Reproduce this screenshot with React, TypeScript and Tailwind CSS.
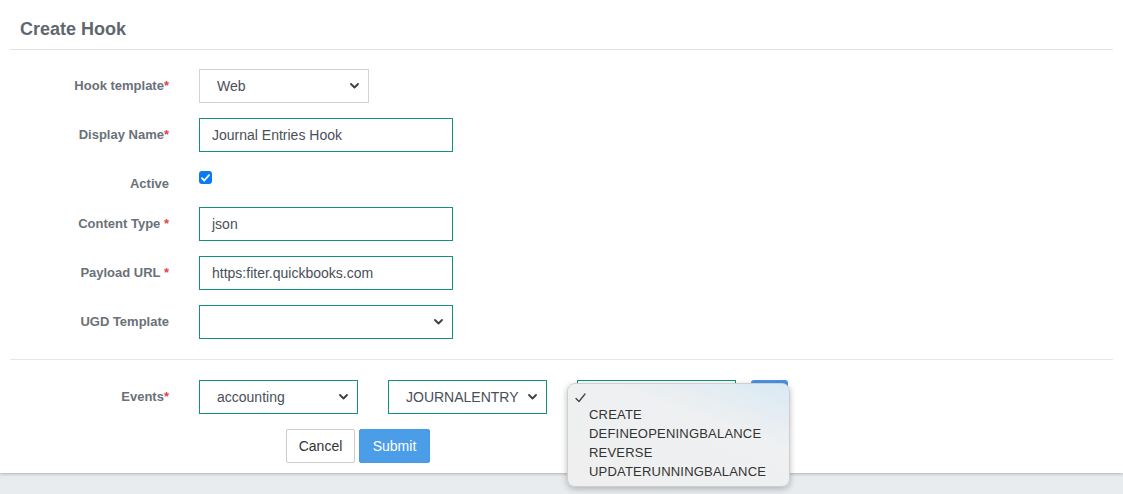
import React from "react";

const teal = "border-[#14917a]";

function Chevron() {
  return (
    <svg width="9" height="6" viewBox="0 0 9 6" className="shrink-0">
      <path d="M1 1l3.5 3.5L8 1" fill="none" stroke="#3a3f44" strokeWidth="1.8" strokeLinecap="round" strokeLinejoin="round" />
    </svg>
  );
}

function Label({ text, star, starSpace }: { text: string; star?: boolean; starSpace?: boolean }) {
  return (
    <div className="w-[169px] shrink-0 text-right text-[13px] font-bold leading-4 text-[#6a7178]">
      {text}
      {star && <span className="text-[#e0434b]">{starSpace ? " *" : "*"}</span>}
    </div>
  );
}

function FakeSelect({ value, width, border }: { value: string; width: string; border: string }) {
  return (
    <div className={`flex h-[34px] items-center justify-between border bg-white pl-[17px] pr-[9px] text-[14px] text-[#495057] ${width} ${border}`}>
      <span>{value}</span>
      <Chevron />
    </div>
  );
}

function TextInput({ value }: { value: string }) {
  return (
    <div className={`flex h-[34px] w-[254px] items-center border bg-white pl-[12px] text-[14px] text-[#495057] ${teal}`}>
      {value}
    </div>
  );
}

const options = ["CREATE", "DEFINEOPENINGBALANCE", "REVERSE", "UPDATERUNNINGBALANCE"];

export default function App() {
  return (
    <div className="min-h-screen bg-[#e9ecef]" style={{ fontFamily: '"Liberation Sans", Arial, sans-serif' }}>
      <div className="h-[473px] bg-white shadow-[0_1px_3px_rgba(0,0,0,0.25)]">
        {/* Header */}
        <div className="mx-[10px] h-[50px] border-b border-[#e3e3e3] pl-[10px] pt-[18px]">
          <h1 className="text-[18px] font-bold leading-[22px] text-[#5f676e]">Create Hook</h1>
        </div>

        <div className="pt-[19px]">
          <div className="flex items-center gap-[30px]">
            <Label text="Hook template" star />
            <FakeSelect value="Web" width="w-[170px]" border="border-[#ced4da]" />
          </div>

          <div className="mt-[15px] flex items-center gap-[30px]">
            <Label text="Display Name" star />
            <TextInput value="Journal Entries Hook" />
          </div>

          <div className="mt-[15px] flex h-[25px] items-start gap-[30px]">
            <div className="mt-[9px]">
              <Label text="Active" />
            </div>
            <div className="mt-[4px] flex h-[13px] w-[13px] items-center justify-center rounded-[3px] bg-[#0b7bf5]">
              <svg width="9" height="8" viewBox="0 0 9 8">
                <path d="M1 4.2l2.3 2.3L8 1.2" fill="none" stroke="white" strokeWidth="1.8" strokeLinecap="round" strokeLinejoin="round" />
              </svg>
            </div>
          </div>

          <div className="mt-[15px] flex items-center gap-[30px]">
            <Label text="Content Type" star starSpace />
            <TextInput value="json" />
          </div>

          <div className="mt-[15px] flex items-center gap-[30px]">
            <Label text="Payload URL" star starSpace />
            <TextInput value="https:fiter.quickbooks.com" />
          </div>

          <div className="mt-[15px] flex items-center gap-[30px]">
            <Label text="UGD Template" />
            <FakeSelect value="" width="w-[254px]" border={teal} />
          </div>
        </div>

        <div className="mx-[10px] mt-[20px] border-t border-[#e6e6e6]" />

        <div className="pt-[20px]">
          <div className="flex items-center">
            <Label text="Events" star />
            <div className="ml-[30px]">
              <FakeSelect value="accounting" width="w-[159px]" border={teal} />
            </div>
            <div className="ml-[30px]">
              <FakeSelect value="JOURNALENTRY" width="w-[159px]" border={teal} />
            </div>
            <div className="relative ml-[30px]">
              <div className={`h-[34px] w-[159px] border bg-white ${teal}`} />
              <div className="absolute left-[-10px] top-[3px] z-10 h-[104px] w-[223px] rounded-[8px] border border-[#cfcfcf] bg-[linear-gradient(200deg,#d9e9f4_0%,#eef0f1_35%,#efefef_100%)] pl-[21px] pt-[2px] text-[13px] leading-[19px] tracking-[0.2px] text-[#333] shadow-[0_2px_6px_rgba(0,0,0,0.25)]">
                <svg width="11" height="10" viewBox="0 0 11 10" className="absolute left-[7px] top-[9px]">
                  <path d="M1 5.5l3 3L10 1" fill="none" stroke="#444" strokeWidth="1.3" strokeLinecap="round" strokeLinejoin="round" />
                </svg>
                <div className="h-[19px]" />
                {options.map((o) => (
                  <div key={o}>{o}</div>
                ))}
              </div>
            </div>
            <div className="ml-[15px] h-[34px] w-[37px] rounded-t-[3px] bg-[#4a93e3]" />
          </div>

          <div className="ml-[286px] mt-[15px] flex gap-[4px]">
            <button className="h-[34px] w-[69px] rounded-[2px] border border-[#cccccc] bg-white text-[14px] text-[#333]">
              Cancel
            </button>
            <button className="h-[34px] w-[71px] rounded-[2px] border border-[#4a9be6] bg-[#4c9de8] text-[14px] text-white">
              Submit
            </button>
          </div>
        </div>
      </div>
    </div>
  );
}
